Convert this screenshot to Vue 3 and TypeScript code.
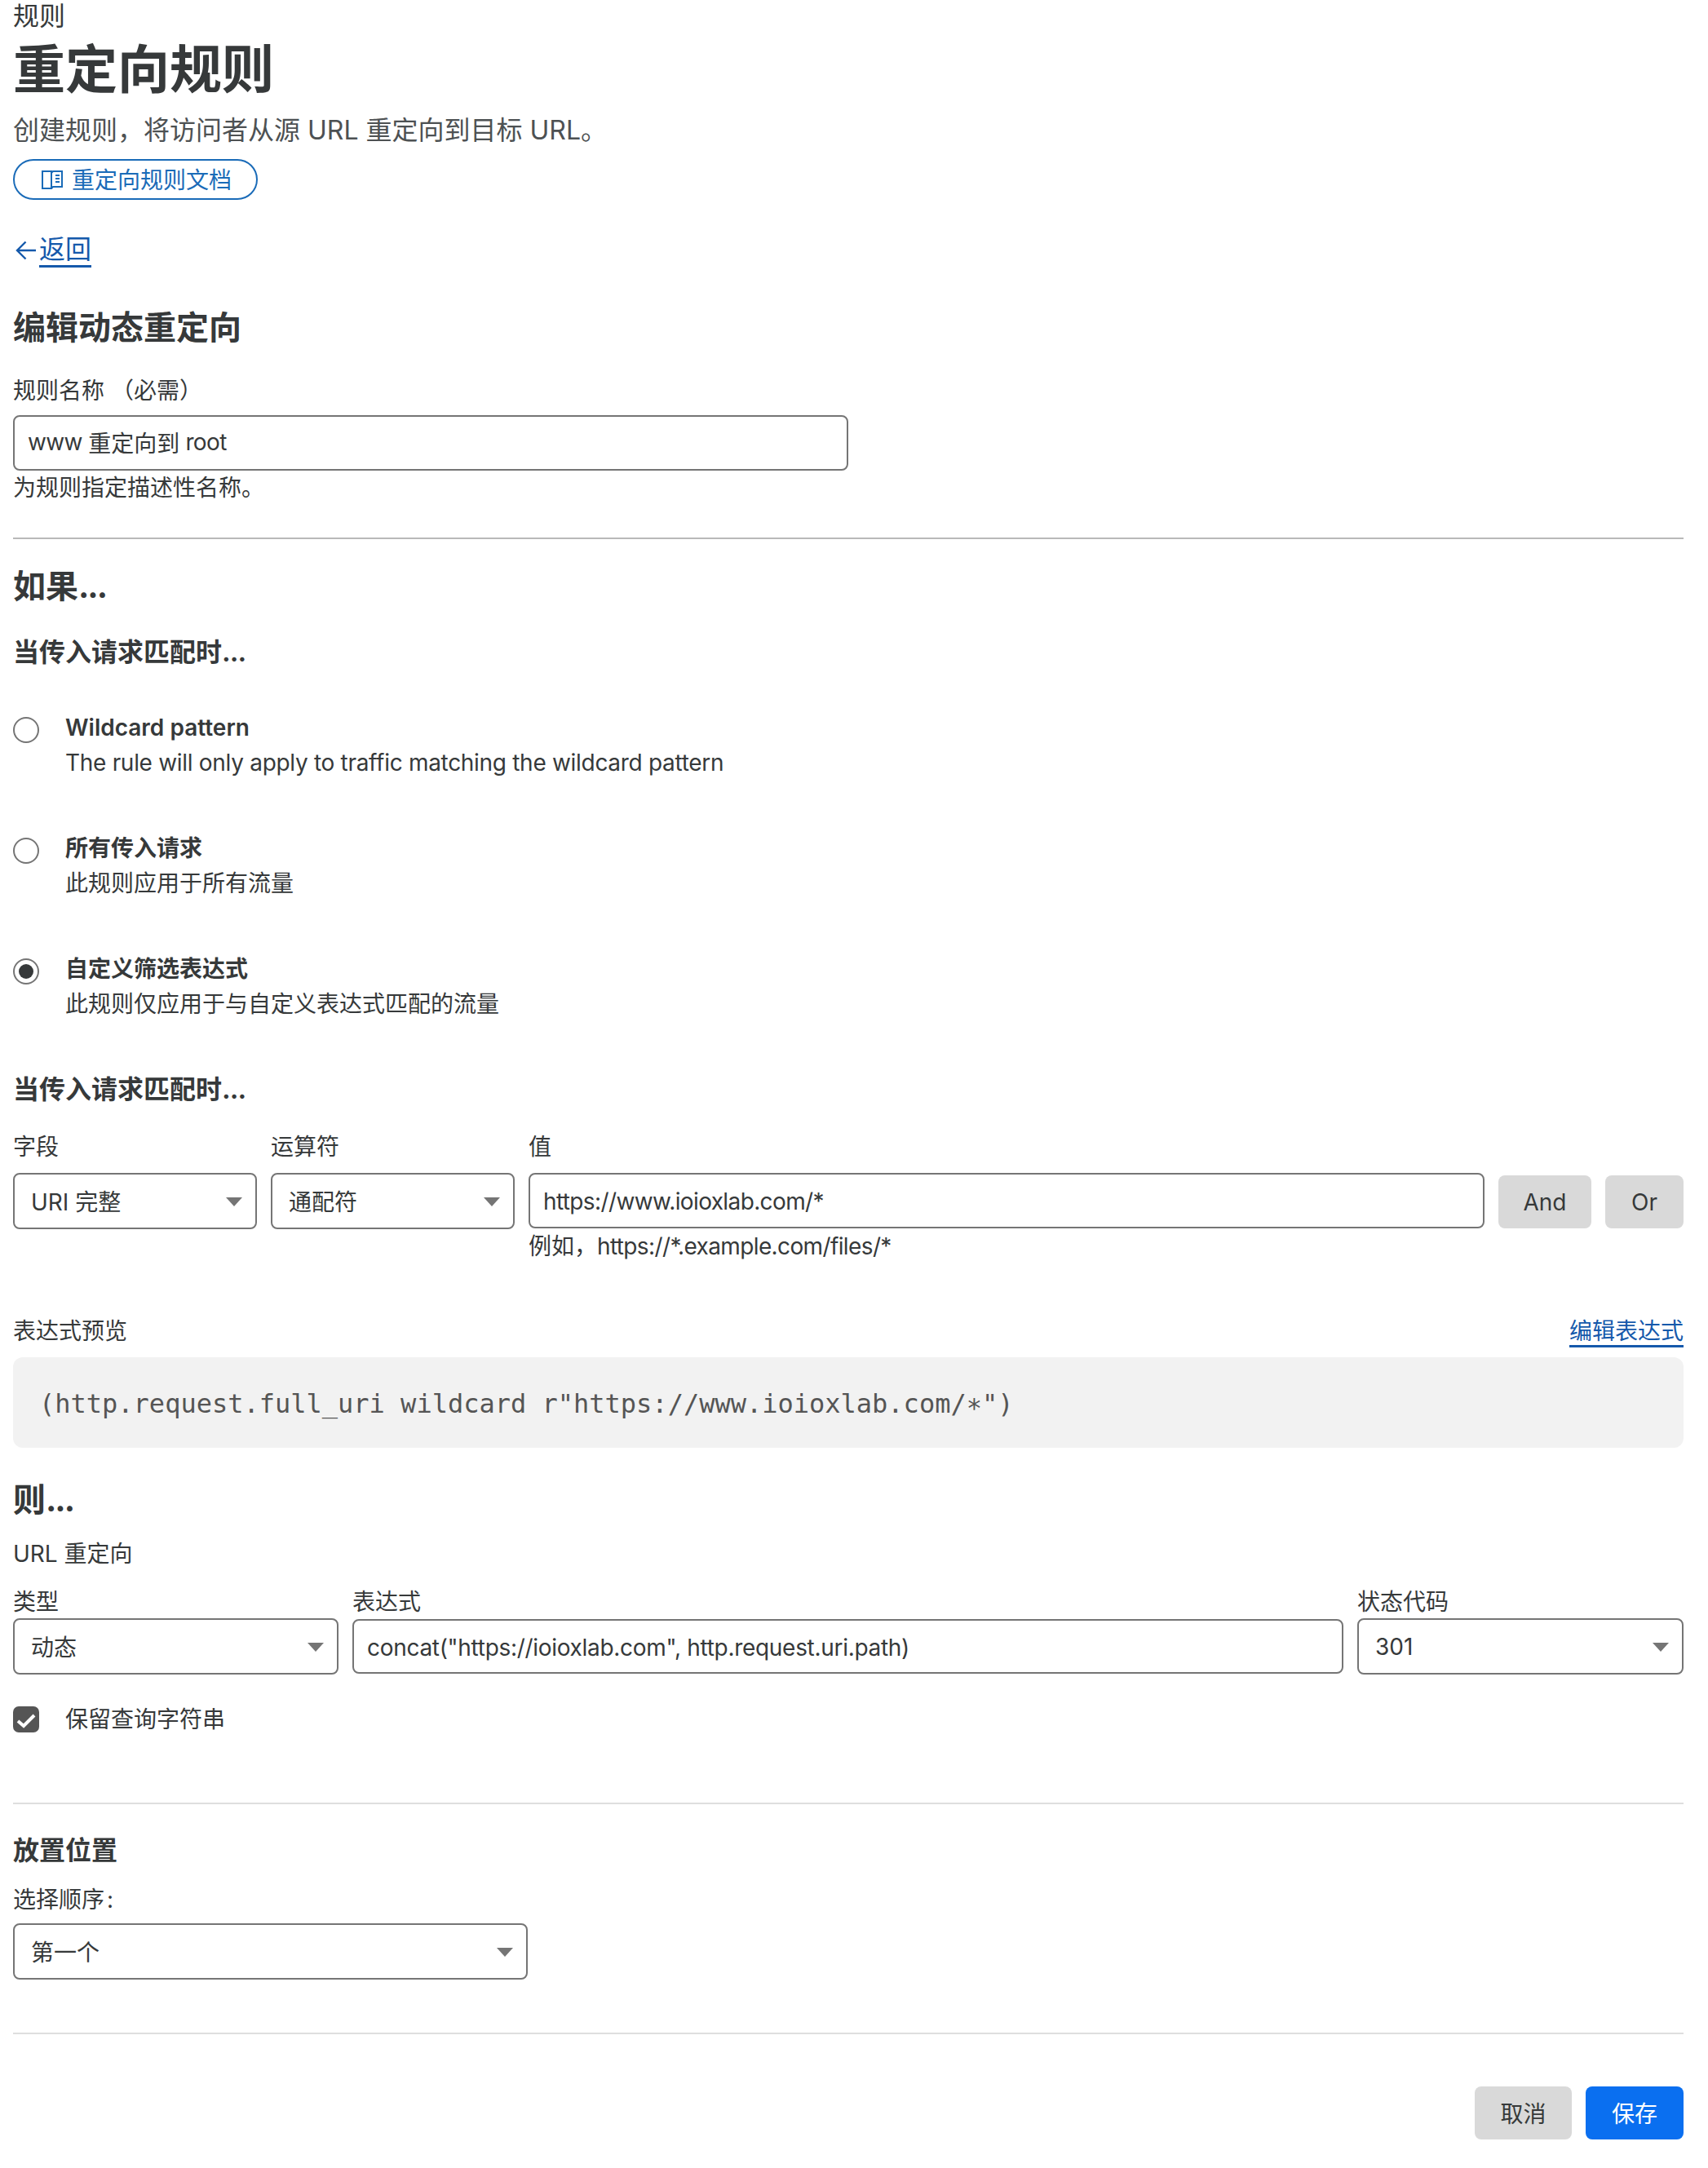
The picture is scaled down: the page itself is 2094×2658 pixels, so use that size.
<script setup lang="ts">
interface RadioOption {
  title: string
  desc: string
  checked: boolean
  latin: boolean
}

const radios: RadioOption[] = [
  { title: 'Wildcard pattern', desc: 'The rule will only apply to traffic matching the wildcard pattern', checked: false, latin: true },
  { title: '所有传入请求', desc: '此规则应用于所有流量', checked: false, latin: false },
  { title: '自定义筛选表达式', desc: '此规则仅应用于与自定义表达式匹配的流量', checked: true, latin: false },
]
</script>

<template>
  <main class="page">
    <div class="crumb">规则</div>
    <h1 class="title">重定向规则</h1>
    <p class="subtitle">创建规则，将访问者从源 URL 重定向到目标 URL。</p>
    <a class="doc-btn">
      <svg class="book" width="26" height="25" viewBox="0 0 26 25" fill="none" stroke="currentColor" stroke-width="2">
        <path d="M1 2h11v21H1z" />
        <path d="M12 4l2-2h11v19H14l-2 2" />
        <path d="M17 7h5M17 11h5M17 15h5" />
      </svg>
      <span class="doc-text">重定向规则文档</span>
    </a>
    <div class="back">
      <svg class="back-arrow" width="25" height="24" viewBox="0 0 25 24" fill="none" stroke="currentColor" stroke-width="2.4">
        <path d="M25 12H2M12.5 1.5L2 12l10.5 10.5" />
      </svg>
      <a class="link back-link">返回</a>
    </div>

    <h2 class="h-lg edit-head">编辑动态重定向</h2>
    <div class="label name-label">规则名称 （必需）</div>
    <div class="input cjk name-input"><span class="ls-6">www </span>重定向到<span class="ls-6"> root</span></div>
    <div class="hint name-hint">为规则指定描述性名称。</div>
    <hr class="rule rule-dark first-rule" />

    <h2 class="h-lg if-head">如果<span class="dots-lg">...</span></h2>
    <h3 class="h-md when-a">当传入请求匹配时<span class="dots-md">...</span></h3>

    <div class="radios">
      <div v-for="r in radios" :key="r.title" class="radio-row">
        <span class="radio" :class="{ on: r.checked }"></span>
        <div class="radio-text">
          <div class="radio-title">{{ r.title }}</div>
          <div class="radio-desc" :class="{ 'ls-3': r.latin }">{{ r.desc }}</div>
        </div>
      </div>
    </div>

    <h3 class="h-md when-b">当传入请求匹配时<span class="dots-md">...</span></h3>
    <div class="match-row">
      <div class="cell field">
        <div class="label">字段</div>
        <div class="select cjk">URI 完整</div>
      </div>
      <div class="cell field">
        <div class="label">运算符</div>
        <div class="select cjk">通配符</div>
      </div>
      <div class="cell grow">
        <div class="label">值</div>
        <div class="input lat ls-6">https://www.ioioxlab.com/*</div>
        <div class="hint value-hint">例如，<span class="ls-6">https://*.example.com/files/*</span></div>
      </div>
      <button class="btn btn-gray and">And</button>
      <button class="btn btn-gray or">Or</button>
    </div>

    <div class="expr-head">
      <div class="label">表达式预览</div>
      <a class="link edit-link">编辑表达式</a>
    </div>
    <div class="code"><span>(http.request.full_uri wildcard r"https://www.ioioxlab.com/<span class="star">*</span>")</span></div>

    <h2 class="h-lg then-head">则<span class="dots-lg">...</span></h2>
    <div class="label url-label">URL 重定向</div>
    <div class="then-row">
      <div class="cell type">
        <div class="label">类型</div>
        <div class="select cjk">动态</div>
      </div>
      <div class="cell grow">
        <div class="label">表达式</div>
        <div class="input lat ls-3 expr-input">concat("https://ioioxlab.com", http.request.uri.path)</div>
      </div>
      <div class="cell status">
        <div class="label">状态代码</div>
        <div class="select">301</div>
      </div>
    </div>
    <div class="check-row">
      <span class="check">
        <svg width="24" height="18" viewBox="0 0 24 18" fill="none" stroke="#fff" stroke-width="4">
          <path d="M2 9l7 6L22 2" />
        </svg>
      </span>
      <span class="label">保留查询字符串</span>
    </div>
    <hr class="rule second-rule" />

    <h3 class="h-md place-head">放置位置</h3>
    <div class="label order-label">选择顺序<span class="colon">:</span></div>
    <div class="select cjk order-select">第一个</div>
    <hr class="rule third-rule" />

    <div class="actions">
      <button class="btn btn-gray cancel">取消</button>
      <button class="btn btn-blue save">保存</button>
    </div>
  </main>
</template>

<style scoped>
.page {
  box-sizing: border-box;
  width: 2094px;
  height: 2658px;
  padding: 0 30px 0 16px;
  overflow: hidden;
  background: #fff;
  color: #36393a;
  font-family: Inter, "Noto Sans CJK SC", sans-serif;
  font-size: 28px;
}
h1, h2, h3, p { margin: 0; }
.ls-3 { letter-spacing: -0.3px; }
.ls-6 { letter-spacing: -0.62px; }
.dots-lg { letter-spacing: -2px; }
.dots-md { letter-spacing: -1px; }
.colon { margin-left: 3px; }
.crumb { font-size: 32px; line-height: 40px; }
.title { margin-top: 7px; font-size: 64px; line-height: 76px; font-weight: 700; }
.subtitle { margin-top: 17px; font-size: 32px; line-height: 40px; color: #4d5153; }
.doc-btn {
  box-sizing: border-box;
  display: flex;
  align-items: center;
  gap: 11px;
  width: 300px;
  height: 50px;
  margin-top: 15px;
  padding-left: 33px;
  border: 2px solid #1a6bb8;
  border-radius: 25px;
  color: #1a6bb8;
  font-size: 28px;
}
.doc-text { padding-bottom: 3px; }
.book { flex: none; }
.back { display: flex; align-items: flex-start; margin-top: 40px; height: 43px; color: #1559ab; }
.back-arrow { flex: none; margin: 10px 4px 0 3px; }
.link { color: #1559ab; border-bottom: 3px solid #1559ab; }
.back-link { padding-top: 2px; font-size: 32px; line-height: 38px; }
.h-lg { font-size: 40px; line-height: 48px; font-weight: 700; }
.h-md { font-size: 32px; line-height: 38px; font-weight: 700; }
.edit-head { margin-top: 50px; }
.label, .hint { font-size: 28px; line-height: 34px; }
.name-label { margin-top: 36px; }
.input, .select {
  box-sizing: border-box;
  display: flex;
  align-items: center;
  height: 68px;
  border: 2px solid #757575;
  border-radius: 8px;
  background: #fff;
  font-size: 28px;
  white-space: pre;
}
.input { padding-left: 16px; }
.select { position: relative; height: 69px; padding-left: 20px; }
.select::after {
  content: "";
  position: absolute;
  right: 16px;
  top: 28px;
  border-left: 10px solid transparent;
  border-right: 10px solid transparent;
  border-top: 11px solid #757575;
}
.cjk { padding-bottom: 2px; }
.lat { padding-top: 2px; }
.name-input { width: 1024px; margin-top: 13px; }
.name-hint { margin-top: 4px; }
.rule { margin: 0; border: 0; height: 2px; background: #dedede; }
.rule-dark { background: #b9b9b9; }
.first-rule { margin-top: 44px; }
.if-head { margin-top: 34px; }
.when-a { margin-top: 38px; }
.radios { display: flex; flex-direction: column; gap: 71px; margin-top: 56px; }
.radio-row { display: flex; gap: 32px; }
.radio {
  box-sizing: border-box;
  flex: none;
  position: relative;
  width: 32px;
  height: 32px;
  margin-top: 4px;
  border: 2px solid #757575;
  border-radius: 50%;
}
.radio.on::after {
  content: "";
  position: absolute;
  inset: 5px;
  border-radius: 50%;
  background: #36393a;
}
.radio-title { font-size: 28px; line-height: 34px; font-weight: 600; }
.radio-desc { margin-top: 9px; font-size: 28px; line-height: 34px; }
.when-b { margin-top: 69px; }
.match-row { display: flex; gap: 17px; margin-top: 34px; }
.cell { display: flex; flex-direction: column; }
.match-row .cell .label { margin-bottom: 15px; }
.field { flex: none; width: 299px; }
.grow { flex: 1; min-width: 0; }
.value-hint { margin-top: 5px; }
.btn {
  flex: none;
  height: 65px;
  padding: 0;
  border: 0;
  border-radius: 8px;
  font-family: inherit;
  font-size: 28px;
}
.btn-gray { background: #d9d9d9; color: #36393a; }
.btn-blue { background: #0a6ff0; color: #fff; }
.and { width: 114px; margin-top: 52px; }
.or { width: 96px; margin-top: 52px; }
.expr-head {
  display: flex;
  justify-content: space-between;
  align-items: flex-start;
  margin-top: 70px;
}
.edit-link { font-size: 28px; line-height: 34px; }
.code {
  box-sizing: border-box;
  display: flex;
  align-items: center;
  height: 111px;
  margin-top: 12px;
  padding: 5px 0 0 32px;
  border-radius: 12px;
  background: #f2f2f2;
  color: #555;
  font-family: "DejaVu Sans Mono", monospace;
  font-size: 32px;
  white-space: nowrap;
}
.star { vertical-align: -5px; line-height: 1; }
.then-head { margin-top: 40px; }
.url-label { margin-top: 25px; }
.then-row { display: flex; gap: 17px; align-items: flex-start; margin-top: 25px; }
.then-row .cell .label { margin-bottom: 3px; }
.type { flex: none; width: 399px; }
.status { flex: none; width: 400px; }
.expr-input { margin-top: 1px; height: 67px; }
.check-row { display: flex; gap: 32px; align-items: center; margin-top: 38px; }
.check {
  flex: none;
  display: flex;
  align-items: center;
  justify-content: center;
  width: 32px;
  height: 32px;
  border-radius: 7px;
  background: #555;
}
.check svg { margin-top: 3px; }
.second-rule { margin-top: 85px; }
.place-head { margin-top: 38px; }
.order-label { margin-top: 24px; }
.order-select { width: 631px; margin-top: 12px; }
.third-rule { margin-top: 65px; }
.actions { display: flex; justify-content: flex-end; gap: 17px; margin-top: 64px; }
.actions .btn { padding-bottom: 2px; }
.cancel { width: 119px; }
.save { width: 120px; }
</style>
